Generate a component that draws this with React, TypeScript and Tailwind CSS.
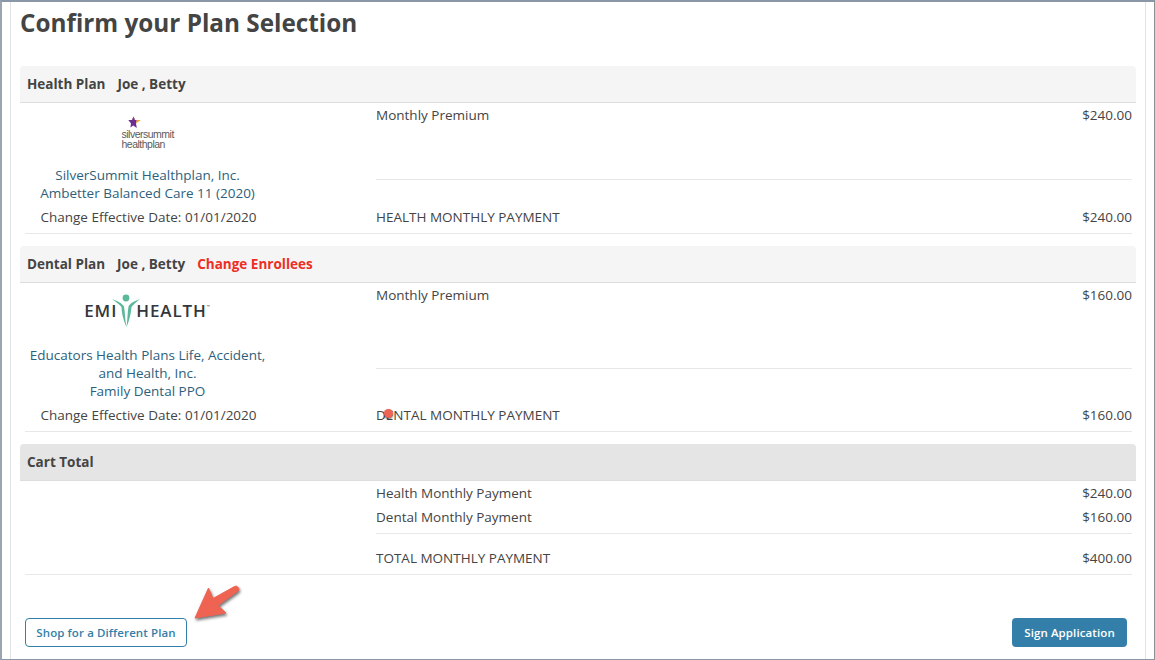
import React from 'react';

function Row({ label, amount, className = '' }: { label: string; amount: string; className?: string }) {
  return (
    <div className={`flex justify-between ${className}`}>
      <span>{label}</span>
      <span>{amount}</span>
    </div>
  );
}

function SilverSummitLogo() {
  return (
    <div className="flex flex-col items-start w-[52px] text-[#5a5a5a] font-['Liberation_Sans',sans-serif] text-[10.5px] leading-[10px] tracking-[-0.5px]">
      <svg className="ml-[6px]" width="13" height="13" viewBox="0 0 13 13">
        <path d="M5.5 0.5 L7 4 L9 4 L8 7.5 L8.8 12 L5.2 9.5 L2.4 11.5 L3 7.5 L0.3 4 L4 4 Z" fill="#6b2f8f" />
        <path d="M5.5 0.5 L6.6 3 L4.4 3 Z" fill="#c8452f" />
        <path d="M8.6 4 L12.8 4 L8 7.5 Z" fill="#f0a63c" />
      </svg>
      <span>silversummit</span>
      <span>healthplan</span>
    </div>
  );
}

function EmiHealthLogo() {
  return (
    <div className="flex items-center text-[#33373b] font-['Open_Sans',sans-serif] text-[17px] font-semibold leading-none tracking-[0.9px]">
      <span>EMI</span>
      <svg className="ml-[-5px] mr-[-4px]" width="28" height="33" viewBox="0 0 28 33">
        <circle cx="14" cy="4" r="3.4" fill="#5cb89a" />
        <path d="M0 5 C5 7 10 9 12 12.5 C13 18 13 26 14.5 33 C11.5 27 9.5 18 9.5 13 C7 10 3 7 0 5 Z" fill="#5cb89a" />
        <path d="M28 5 C23 7 18 9 16.5 12.5 C15.5 18 15.5 26 14.5 33 C17.5 27 19 18 19.5 13 C22 10 25 7 28 5 Z" fill="#5cb89a" />
      </svg>
      <span>HEALTH</span>
      <span className="text-[4px] self-start mt-[11px]">™</span>
    </div>
  );
}

function PlanHeader({ children, dark }: { children: React.ReactNode; dark?: boolean }) {
  return (
    <div className={`flex items-center gap-3 h-[37px] px-[7px] rounded-t-[4px] border-b border-[#ddd] font-bold text-[#444] ${dark ? 'bg-[#e5e5e5]' : 'bg-[#f5f5f5]'}`}>
      {children}
    </div>
  );
}

export default function App() {
  return (
    <div className="relative w-[1155px] h-[660px] overflow-hidden bg-white border-t-2 border-b border-l-2 border-r border-t-[#8a97a6] border-b-[#8a97a6] border-l-[#9aa5b1] border-r-[#8f8f8f] font-['Open_Sans',sans-serif] text-[13.5px] leading-[18px] text-[#444]">
      <div className="ml-2 mr-[8px] h-full border-l border-r border-[#e3e3e3] px-[9px]">
        <h1 className="h-[64px] pt-[3px] text-[24.3px] leading-[35px] font-bold text-[#444]">Confirm your Plan Selection</h1>

        <PlanHeader>
          <span>Health Plan</span>
          <span>Joe , Betty</span>
        </PlanHeader>
        <div className="flex ml-[5px] mr-[4px] h-[131px] border-b border-[#e8e8e8]">
          <div className="w-[351px] shrink-0">
            <div className="w-[245px] h-full flex flex-col items-center text-center">
              <div className="h-[63px] pt-[13px]">
                <SilverSummitLogo />
              </div>
              <div className="text-[#2d5f7c]">
                SilverSummit Healthplan, Inc.
                <br />
                Ambetter Balanced Care 11 (2020)
              </div>
              <div className="mt-[6px] ml-[2px]">Change Effective Date: 01/01/2020</div>
            </div>
          </div>
          <div className="flex-1 flex flex-col">
            <Row label="Monthly Premium" amount="$240.00" className="h-[77px] pt-[3px] border-b border-[#e8e8e8]" />
            <Row label="HEALTH MONTHLY PAYMENT" amount="$240.00" className="pt-[28px]" />
          </div>
        </div>

        <div className="mt-3">
          <PlanHeader>
            <span>Dental Plan</span>
            <span>Joe , Betty</span>
            <span className="text-[#ee2e24]">Change Enrollees</span>
          </PlanHeader>
        </div>
        <div className="relative flex ml-[5px] mr-[4px] h-[149px] border-b border-[#e8e8e8]">
          <div className="w-[351px] shrink-0">
            <div className="w-[245px] h-full flex flex-col items-center text-center">
              <div className="h-[63px] pt-[11px]">
                <EmiHealthLogo />
              </div>
              <div className="text-[#2d5f7c]">
                Educators Health Plans Life, Accident,
                <br />
                and Health, Inc.
                <br />
                Family Dental PPO
              </div>
              <div className="mt-[6px] ml-[2px]">Change Effective Date: 01/01/2020</div>
            </div>
          </div>
          <div className="flex-1 flex flex-col">
            <Row label="Monthly Premium" amount="$160.00" className="h-[86px] pt-[3px] border-b border-[#e8e8e8]" />
            <Row label="DENTAL MONTHLY PAYMENT" amount="$160.00" className="pt-[37px]" />
          </div>
          {/* cursor dot from the recording */}
          <div className="absolute left-[359px] top-[126px] w-[9px] h-[9px] rounded-full bg-[#ee6352] shadow-[0_1px_2px_rgba(0,0,0,0.6)]" />
        </div>

        <div className="mt-3">
          <PlanHeader dark>
            <span>Cart Total</span>
          </PlanHeader>
        </div>
        <div className="ml-[356px] mr-[4px] pt-[2px]">
          <Row label="Health Monthly Payment" amount="$240.00" className="h-[24px] pt-[1px]" />
          <Row label="Dental Monthly Payment" amount="$160.00" className="h-[27px] pt-[1px] border-b border-[#e8e8e8]" />
        </div>
        <div className="ml-[5px] mr-[4px] h-[41px] border-b border-[#e8e8e8] pl-[351px] pt-[15px]">
          <Row label="TOTAL MONTHLY PAYMENT" amount="$400.00" />
        </div>

        <div className="flex justify-between ml-[5px] mr-[9px] mt-[43px]">
          <button className="w-[162px] h-[29px] rounded-[4px] border border-[#337fa9] bg-white text-[11.5px] font-semibold tracking-[0.1px] text-[#337fa9]">
            Shop for a Different Plan
          </button>
          <button className="w-[115px] h-[29px] rounded-[4px] bg-[#337fa9] text-[11.5px] font-semibold tracking-[0.1px] text-white">
            Sign Application
          </button>
        </div>
      </div>

      <svg className="absolute left-[188px] top-[580px] drop-shadow-[1px_2px_1.5px_rgba(0,0,0,0.55)]" width="54" height="40" viewBox="0 0 54 40">
        <path d="M44.5 4.5 C47 3 50.5 6.5 48 9 L28 23.5 L36 31 L5 36 L18.5 6 L23 16.5 Z" fill="#ee6352" stroke="#ee6352" strokeLinejoin="round" />
      </svg>
    </div>
  );
}
